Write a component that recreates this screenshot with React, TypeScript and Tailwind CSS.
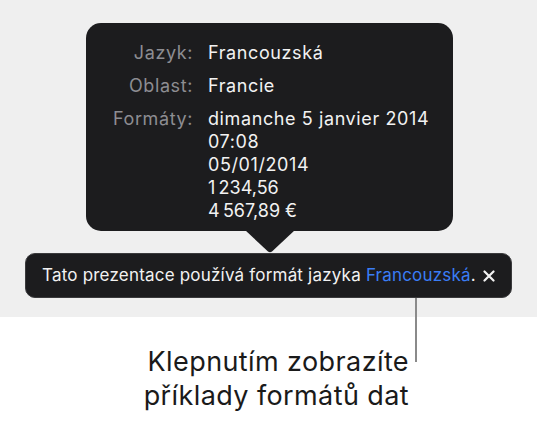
import React from "react";

export default function App() {
  const font = { fontFamily: "Inter, 'Noto Sans', sans-serif" };
  return (
    <div className="relative w-[537px] h-[422px] bg-white overflow-hidden" style={font}>
      <div className="h-[317px] bg-[#efefef] pt-[23px]">
        <div className="relative ml-[86px] w-[367px] h-[208px] rounded-[15px] bg-[#1c1c1e] pt-[18px]">
          <div className="grid grid-cols-[107px_1fr] gap-x-[15px] text-[18px] leading-[23px] tracking-[0.6px]">
            <div className="text-right text-[#8d8d92]">Jazyk:</div>
            <div className="text-[#f2f2f2]">Francouzská</div>
            <div className="text-right text-[#8d8d92] mt-[10px]">Oblast:</div>
            <div className="text-[#f2f2f2] mt-[10px]">Francie</div>
            <div className="text-right text-[#8d8d92] mt-[10px]">Formáty:</div>
            <div className="text-[#f2f2f2] mt-[10px]">
              <div>dimanche 5 janvier 2014</div>
              <div>07:08</div>
              <div>05/01/2014</div>
              <div>1{"\u202F"}234,56</div>
              <div>4{"\u202F"}567,89 €</div>
            </div>
          </div>
          <svg className="absolute left-[159px] top-[207px]" width="50" height="23" viewBox="0 0 50 23">
            <path d="M0 0 L50 0 L27 21.5 Q25 23 23 21.5 Z" fill="#1c1c1e" />
          </svg>
        </div>
        <div className="ml-[25px] mt-[22px] w-[487px] h-[45px] rounded-[10px] bg-[#1c1c1e] border border-[#3a3a3c] flex items-center pl-[16px] pr-[14px] text-[17px] text-[#f2f2f2] tracking-[0.2px]">
          <span className="flex-1 whitespace-nowrap">
            Tato prezentace používá formát jazyka <span className="text-[#3a7df5]">Francouzská</span>.
          </span>
          <svg width="12" height="12" viewBox="0 0 12 12" className="mr-[2px]">
            <path d="M1.5 1.5 L10.5 10.5 M10.5 1.5 L1.5 10.5" stroke="#f2f2f2" strokeWidth="2.2" strokeLinecap="round" />
          </svg>
        </div>
      </div>
      <div className="absolute left-[415px] top-[298px] w-[2px] h-[64px] bg-[#8a8a8a]" />
      <div className="mt-[28px] pr-[128px] text-right text-[27px] leading-[34px] text-[#1a1a1a] tracking-[0.4px]">
        <div>Klepnutím zobrazíte</div>
        <div>příklady formátů dat</div>
      </div>
    </div>
  );
}
